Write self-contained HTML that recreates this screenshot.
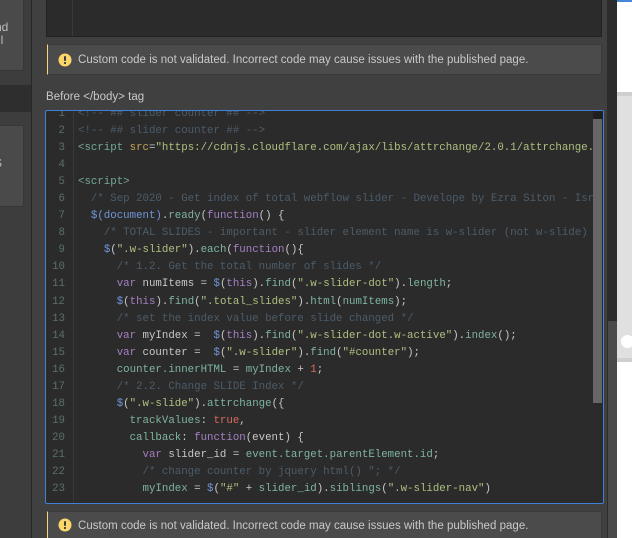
<!DOCTYPE html>
<html><head><meta charset="utf-8">
<style>
html,body{margin:0;padding:0;background:#404040;width:632px;height:538px;overflow:hidden}
body{position:relative;font-family:"Liberation Sans",sans-serif}
#w{position:absolute;left:0;top:0;width:632px;height:538px;overflow:hidden;background:#404040}
.a{position:absolute;box-sizing:border-box}
.alert{left:47px;width:555px;background:#4b4b4b;border:1px solid #3a3a3a;border-left:1px solid #f4d97c;color:#c9c9c9;font-size:11.5px;letter-spacing:.02px;white-space:nowrap}
.alert span{position:absolute;left:30px;top:8px;line-height:15px}
.alert svg{position:absolute;left:9.5px;top:8px}
pre{margin:0;font-family:"Liberation Mono",monospace;font-size:10.75px;line-height:17.05px;white-space:pre;font-weight:400}
.c{color:#4c5c69}.t{color:#74a99b}.k{color:#a57fc4}.b{color:#7095d8}.s{color:#aec080}.o{color:#c9a355}.r{color:#d9695b}.p{color:#7fb59f}.n{color:#c8c8c8}
</style></head><body><div id="w">
<!-- left sidebar -->
<div class="a" style="left:0;top:0;width:31px;height:538px;background:#3d3d3d"></div>
<div class="a" style="left:31px;top:0;width:1px;height:538px;background:#282828"></div>
<div class="a" style="left:0;top:-2px;width:24px;height:73px;background:#4a4a4a;border:1px solid #383838;border-left:0;border-radius:0 2px 2px 0;overflow:hidden;color:#bdbdbd;font-size:12px;line-height:14px">
  <div style="position:absolute;left:-5px;top:21px">nd</div><div style="position:absolute;left:-2px;top:34px">ll</div></div>
<div class="a" style="left:0;top:85px;width:31px;height:27px;background:#2e2e2e"></div>
<div class="a" style="left:0;top:125px;width:24px;height:82px;background:#4a4a4a;border:1px solid #383838;border-left:0;border-radius:0 2px 2px 0;overflow:hidden;color:#bdbdbd;font-size:12px;line-height:14px">
  <div style="position:absolute;left:-6px;top:30px">S</div></div>
<!-- right page -->
<div class="a" style="left:607px;top:0;width:10px;height:538px;background:#2c2c2c"></div>
<div class="a" style="left:608px;top:321px;width:9px;height:217px;background:#4a4a4a"></div>
<div class="a" style="left:617px;top:0;width:15px;height:538px;background:#fff"></div>
<div class="a" style="left:617px;top:0;width:15px;height:2px;background:#4a86d8"></div>
<div class="a" style="left:617px;top:92px;width:15px;height:4px;background:#cfcfcf"></div>
<div class="a" style="left:617px;top:96px;width:15px;height:262px;background:#e0e0e0"></div>
<div class="a" style="left:617px;top:358px;width:15px;height:4px;background:#cfcfcf"></div>
<div class="a" style="left:621px;top:335px;width:13px;height:13px;border-radius:50%;background:#fff"></div>
<!-- top code box -->
<div class="a" style="left:46px;top:-2px;width:556px;height:39px;background:#2b2b2b;border:1px solid #222"></div>
<div class="a" style="left:72px;top:0;width:1px;height:36px;background:#3a3a3a"></div>
<!-- alerts -->
<div class="a alert" style="top:44px;height:31px"><svg width="14" height="14" viewBox="0 0 14 14"><circle cx="7" cy="7" r="6.5" fill="#fbd66b"/><rect x="6" y="3" width="2" height="5" rx="1" fill="#3a3a3a"/><circle cx="7" cy="10" r="1.1" fill="#3a3a3a"/></svg><span>Custom code is not validated. Incorrect code may cause issues with the published page.</span></div>
<div class="a" style="left:46px;top:90px;color:#c9c9c9;font-size:11.5px;line-height:15px;letter-spacing:.02px;white-space:nowrap">Before &lt;/body&gt; tag</div>
<!-- editor -->
<div class="a" style="left:45px;top:110px;width:559px;height:394px;background:#2b2b2b;border:1px solid #3f80d8;border-radius:2px;overflow:hidden">
  <div class="a" style="left:27px;top:0;width:1px;height:392px;background:#383838"></div>
  <pre class="a" style="left:0;top:-5px;width:19px;text-align:right;color:#5b7069">1
2
3
4
5
6
7
8
9
10
11
12
13
14
15
16
17
18
19
20
21
22
23</pre>
  <div class="a" style="left:32px;top:0;width:515px;height:392px;overflow:hidden">
<pre class="a" style="left:0;top:-5px"><span class="c">&lt;!-- ## slider counter ## --&gt;</span>
<span class="c">&lt;!-- ## slider counter ## --&gt;</span>
<span class="t">&lt;script</span> <span class="o">src</span><span class="n">=</span><span class="s">"https://cdnjs.cloudflare.com/ajax/libs/attrchange/2.0.1/attrchange.js"</span><span class="t">&gt;&lt;/script&gt;</span>

<span class="t">&lt;script&gt;</span>
  <span class="c">/* Sep 2020 - Get index of total webflow slider - Develope by Ezra Siton - Isr</span>
  <span class="b">$(document)</span><span class="n">.</span><span class="p">ready</span><span class="n">(</span><span class="k">function</span><span class="n">() {</span>
    <span class="c">/* TOTAL SLIDES - important - slider element name is w-slider (not w-slide) */</span>
    <span class="b">$</span><span class="n">(</span><span class="s">".w-slider"</span><span class="n">).</span><span class="p">each</span><span class="n">(</span><span class="k">function</span><span class="n">(){</span>
      <span class="c">/* 1.2. Get the total number of slides */</span>
      <span class="k">var</span> <span class="n">numItems =</span> <span class="b">$</span><span class="n">(</span><span class="k">this</span><span class="n">).</span><span class="p">find</span><span class="n">(</span><span class="s">".w-slider-dot"</span><span class="n">).</span><span class="p">length</span><span class="n">;</span>
      <span class="b">$</span><span class="n">(</span><span class="k">this</span><span class="n">).</span><span class="p">find</span><span class="n">(</span><span class="s">".total_slides"</span><span class="n">).</span><span class="p">html</span><span class="n">(</span><span class="p">numItems</span><span class="n">);</span>
      <span class="c">/* set the index value before slide changed */</span>
      <span class="k">var</span> <span class="n">myIndex =  </span><span class="b">$</span><span class="n">(</span><span class="k">this</span><span class="n">).</span><span class="p">find</span><span class="n">(</span><span class="s">".w-slider-dot.w-active"</span><span class="n">).</span><span class="p">index</span><span class="n">();</span>
      <span class="k">var</span> <span class="n">counter =  </span><span class="b">$</span><span class="n">(</span><span class="s">".w-slider"</span><span class="n">).</span><span class="p">find</span><span class="n">(</span><span class="s">"#counter"</span><span class="n">);</span>
      <span class="p">counter.innerHTML</span> <span class="n">=</span> <span class="p">myIndex</span> <span class="n">+</span> <span class="r">1</span><span class="n">;</span>
      <span class="c">/* 2.2. Change SLIDE Index */</span>
      <span class="b">$</span><span class="n">(</span><span class="s">".w-slide"</span><span class="n">).</span><span class="p">attrchange</span><span class="n">({</span>
        <span class="p">trackValues</span><span class="n">:</span> <span class="r">true</span><span class="n">,</span>
        <span class="p">callback</span><span class="n">:</span> <span class="k">function</span><span class="n">(event) {</span>
          <span class="k">var</span> <span class="n">slider_id =</span> <span class="p">event.target.parentElement.id</span><span class="n">;</span>
          <span class="c">/* change counter by jquery html() "; */</span>
          <span class="p">myIndex</span> <span class="n">=</span> <span class="b">$</span><span class="n">(</span><span class="s">"#"</span> <span class="n">+</span> <span class="p">slider_id</span><span class="n">).</span><span class="p">siblings</span><span class="n">(</span><span class="s">".w-slider-nav"</span><span class="n">)</span></pre>
  </div>
  <div class="a" style="left:547px;top:0;width:10px;height:392px;background:#2b2b2b"></div>
  <div class="a" style="left:547px;top:0;width:10px;height:8px;background:#1f1f1f"></div>
  <div class="a" style="left:547px;top:8px;width:9px;height:284px;background:#666"></div>
</div>
<div class="a alert" style="top:511px;height:30px"><svg style="top:6px" width="14" height="14" viewBox="0 0 14 14"><circle cx="7" cy="7" r="6.5" fill="#fbd66b"/><rect x="6" y="3" width="2" height="5" rx="1" fill="#3a3a3a"/><circle cx="7" cy="10" r="1.1" fill="#3a3a3a"/></svg><span style="top:7px">Custom code is not validated. Incorrect code may cause issues with the published page.</span></div>
</div></body></html>
